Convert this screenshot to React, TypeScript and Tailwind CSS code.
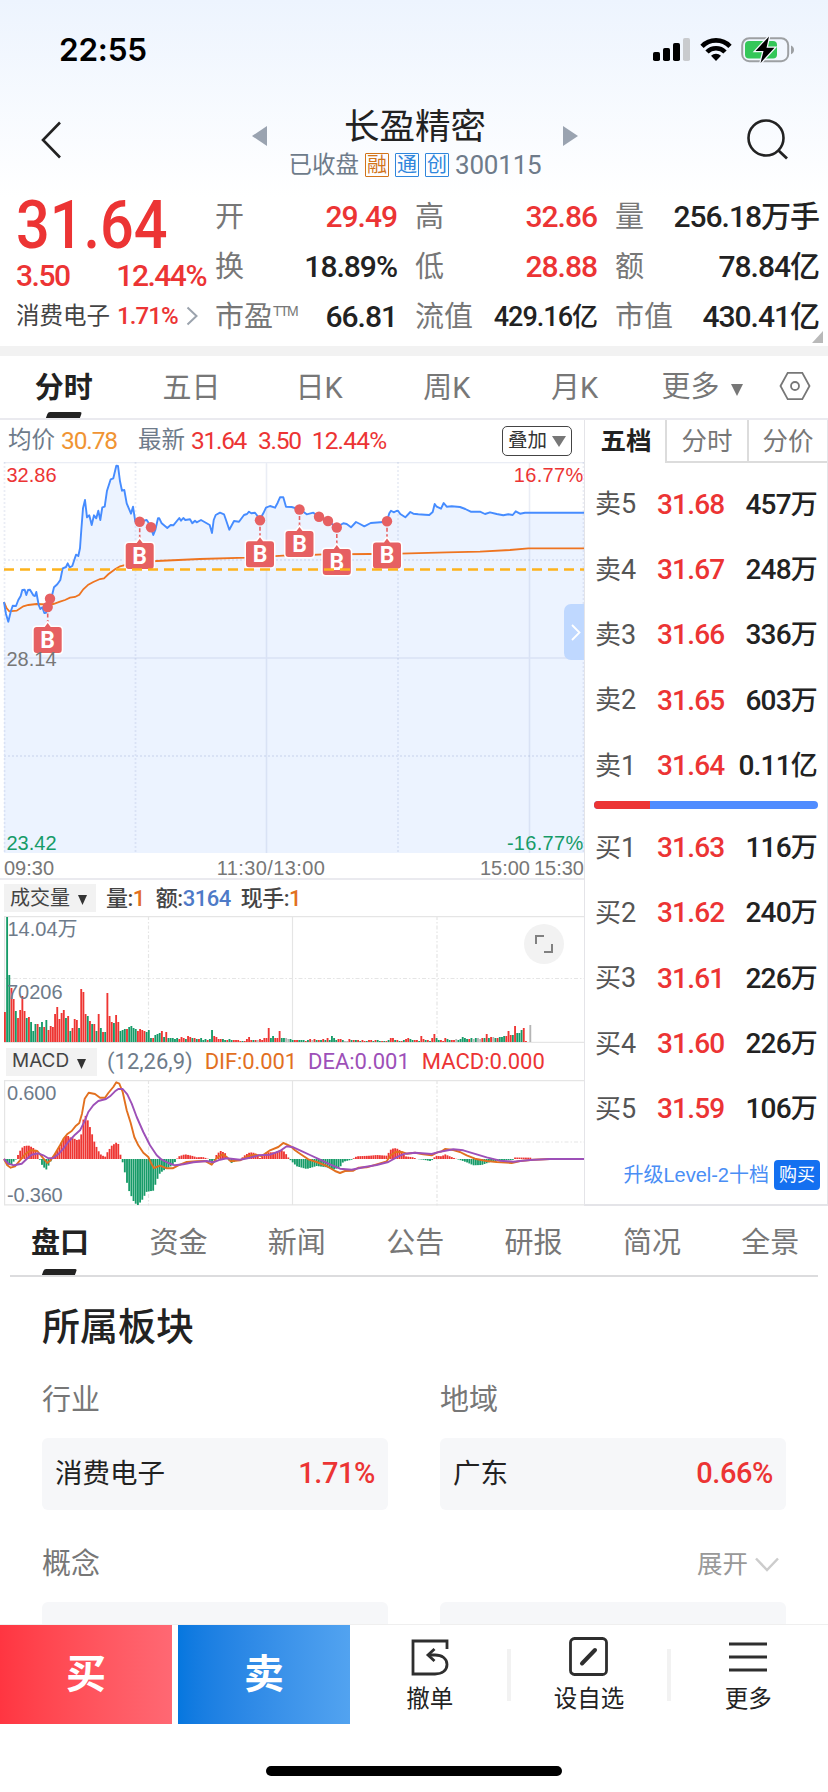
import React from 'react';
import clsx from 'clsx';

type Point = [number, number];

const QUOTES = [
  { label: '开', value: '29.49', up: true },
  { label: '高', value: '32.86', up: true },
  { label: '量', value: '256.18', unit: '万手' },
  { label: '换', value: '18.89%' },
  { label: '低', value: '28.88', up: true },
  { label: '额', value: '78.84', unit: '亿' },
  { label: '市盈', sup: 'TTM', value: '66.81' },
  { label: '流值', value: '429.16', unit: '亿', small: true },
  { label: '市值', value: '430.41', unit: '亿' },
];

const PERIODS = ['分时', '五日', '日K', '周K', '月K'];
const SECTIONS = ['盘口', '资金', '新闻', '公告', '研报', '简况', '全景'];

const SELLS = [
  ['卖5', '31.68', '457', '万'],
  ['卖4', '31.67', '248', '万'],
  ['卖3', '31.66', '336', '万'],
  ['卖2', '31.65', '603', '万'],
  ['卖1', '31.64', '0.11', '亿'],
];

const BUYS = [
  ['买1', '31.63', '116', '万'],
  ['买2', '31.62', '240', '万'],
  ['买3', '31.61', '226', '万'],
  ['买4', '31.60', '226', '万'],
  ['买5', '31.59', '106', '万'],
];

// Chart series, in pixels of each chart's own viewBox
const PRICE =
  '4,140 6,152 8.3,159.7 10.7,149.7 12.7,143.7 16,144 18.3,138 20.7,134 22.3,128 24.7,127.7 26.3,133 28,128 30,127.7 33.3,133.3 35,134 36.3,130 38.7,143 40.3,147 42.3,145.3 44.3,151 46,150.7 48.7,141.3 50.7,138.7 54,125.3 57.3,122.3 60.3,118 62.7,106.3 66,105 67.7,101.3 69.7,105.3 72.3,104 76,92.7 78.3,94 80,86.3 81.3,68 83,46.3 85,38 87,55.3 89.3,53.3 91.7,63 94,53.3 96.3,56.3 98.3,48.7 100.3,58 102.3,45.3 104.7,44.7 107,28.7 110.7,17.3 113.3,16.3 116.3,3.7 118,4 120,19.3 122,28.7 124.3,28 126.7,41.3 131,51.7 133,44.7 135.3,59.7 137.3,58 139.3,59.7 146.7,58 150,63 153.3,73 155.3,68 158,56.3 159.3,56.3 161.7,61.3 167.3,66 170.7,63 173.3,63.3 179.3,56 181,58.7 183.3,56 185.3,58 190,57.3 192.3,61.3 195,58.7 196.7,60.3 201,58 206.7,61.3 209.7,63 212,71 213.7,58 215.7,53 220,50.7 224,52.3 226,58 229.3,67.7 234,59 239,59.7 244,53 247,52 249,49.7 251.3,51.3 255,50.7 260,57.3 263.3,51.3 266,45.7 270,44 275,45.7 277.7,40.7 280,35.3 283.3,35.3 286,44.7 291.7,45 299.3,47.3 303.3,49.7 306.7,52.3 313.3,50.7 319,54.7 327.7,59 336.7,65.3 343.3,61.3 346.7,62 351,65.3 356,60 360,62 364.3,64.3 370.7,61 386.7,59.7 389.3,51.3 391,48.7 393.7,50.3 396.3,49 398,48.7 400.3,52 405.3,55.3 410.3,50 413.3,51.7 418.3,52.3 425,52.7 429.3,53 432.7,50 434.7,42 436.7,44.7 441,46.7 443.7,41 446.7,44.7 451.7,44.3 460,45 465.3,47 470.7,49.7 480,49.7 485,52 490,50.3 496.7,52 503.3,53.3 508.3,52.3 512.7,53 515.7,49.3 520,51.7 525,50.7 584,50.7';

const AVERAGE =
  '4,140 6.7,146.3 9.3,149.3 16.7,148.7 23.3,144.3 28.3,143 36.7,142 46.7,142.3 53.3,142 60,139.7 65,138 70,135.7 75,135 79.3,132.7 83.3,127.3 88.3,122.7 93.3,120 100,117 104,116.3 108.3,112.3 115,107.3 120,104.3 126.7,102.7 140,100.3 156.7,99 200,97 246.7,95.7 283.3,93.7 299,93.5 323.3,92.3 370,92 400,91.7 446.7,90.3 480,89.7 510,88 528.3,86.3 584,86.3';

const DIF =
  '4,75 7.3,81.3 10.7,83.7 15,82.3 20,76.3 25,70.3 30.7,66.3 37.3,67 42.7,73.7 47.3,79 50.7,76.3 55,69.7 60,61.3 64,54 67.7,49.7 71.7,47 76,41.7 79.3,39 82,29.7 84.7,14.7 88.7,8.7 95,10 100,13.7 105,13.7 108.3,9 113.3,3 116.3,-1.7 119.3,-0.3 122.7,8 126.7,26.3 130.7,39 134.3,53 138.3,61.3 143.3,68.7 148.3,73 151.7,80.3 154,84 160,81.7 166.7,84.3 172.7,84.3 178.3,81.3 186.7,78 196.7,77.3 205,77 211.7,80.7 216.7,74 222.7,70.3 226.7,73 230.7,77.3 240,76.3 248.3,72 255,70.7 261.7,72 270,66.3 278.3,63 283.3,59 286.7,60.3 290.7,62.3 295,66.3 300,69.7 308.3,75.3 316.7,78 326.7,82 335,87 340,89 345,87 353.3,86.7 358.3,83.7 366.7,83.3 376.7,80.3 386.7,77.3 390.7,71.3 396,67.7 401.7,68 406.7,69.7 415,68.7 423.3,70.3 431.7,71.3 436.7,68.7 441.7,67.3 445,65 453.3,66 460,68 466.7,71.3 475,74.7 486.7,77 496.7,78 511.7,79 520,77 533.3,75.7 550,75 584,75';

const DEA =
  '4,75 8.3,79.7 14,81.3 21.7,79.7 26.7,75 31.7,70.7 38.3,69.3 43.3,71.3 48.3,74.3 53.3,74 58.3,70.3 63.3,64.7 68.3,58 75,50.7 80,46.3 85,36.3 88.3,28 93.3,21.3 98.3,17 106,15 110,12.3 115,7.3 118.3,5 122.7,5 127.3,10.3 131.7,19.7 136.7,33 143.3,48 150,61.3 156.7,71.3 161.7,75.7 168.3,79 175,81.3 183.3,80.3 193.3,78.3 206.7,77 213.3,78.3 220,75.7 226.7,74.3 240,75.7 250,73.7 258.3,71.3 270,70.7 280,67 286.7,62.3 293.3,63.3 300,66.3 310,71 320,75.7 330,80.3 340,84.7 351.7,85.7 363.3,83.3 376.7,81 388.3,78 398.3,72.3 405,69.7 415,68.7 431.7,70 440,67.7 453.3,65.3 463.3,66.3 473.3,69.3 486.7,73.3 500,76.7 513.3,77.7 530,76 550,75 584,75';

// MACD histogram envelope: [x, height], green below zero
const HIST: Point[] = [
  [4, -1], [7.3, -6], [10.7, -6], [15, -1], [16.7, 0], [18.3, 5], [21.7, 11], [25, 13.3], [29.3, 13.3], [35, 10], [38.7, 3],
  [39.5, 0], [41.3, -5], [46, -11], [50, -4], [51.7, 0], [53.3, 3.3], [58.3, 10], [63.3, 20], [66.7, 24], [70, 21.7], [75, 20],
  [78.3, 18.3], [81, 23], [82.7, 36.7], [84.7, 44.7], [87.3, 40], [90, 31.7], [95, 15], [100, 5], [105, 2], [107.3, 6.7],
  [111.7, 13.3], [116.7, 16.7], [118.3, 15], [120.3, 5], [121.3, 0], [123.3, -5], [126, -20], [129, -31.7], [133.3, -41.7],
  [137.3, -46.7], [141.7, -41.7], [146.7, -32.7], [153.3, -31.7], [156.7, -21.7], [160, -14], [166.7, -9.3], [173.3, -6],
  [176.7, 0], [179, 2.7], [185, 4.7], [191.7, 3.3], [196.7, 1.7], [202.7, 2], [207, 0.6], [208.3, 0], [212, -4.7], [215, 0],
  [216.7, 5], [220.7, 8], [225, 6], [227.7, 0], [231.7, -4], [236.7, -1.7], [240.7, 0], [245, 4], [250, 6.7], [255, 6],
  [260, 1], [266.7, 6.7], [275, 6.7], [280, 9.3], [283.3, 8.3], [286, 5], [289.3, 0], [293.3, -4], [296.7, -7.3], [306.7, -10],
  [316.7, -7], [326.7, -8.3], [333.3, -10.7], [340, -8.3], [343.3, -2.7], [351.7, -0.7], [354, 1], [356.7, 2.7], [370, 3.3],
  [376.7, 4], [386.7, 3.3], [390.7, 9.3], [394, 11], [398.3, 10], [401.7, 7.3], [405, 2.7], [413.3, 1.7], [416.7, 0],
  [423.3, -0.7], [430, -2], [433.5, -0.5], [435, 3.3], [441.7, 2.7], [445, 4.7], [448.3, 3.3], [453.3, 1.3], [456.7, 0],
  [460, -1], [466.7, -3.3], [473.3, -6.3], [481.7, -6], [490, -3], [500, -1.7], [512.7, -1], [515, 1.5], [533.3, 1.3], [550, 0],
];

// One bar per minute: r = up, g = down, x = flat
const VOLUME =
  'r30 g125 g67 r54 r43 g31 r24 r32 r46 r31 g24 r25 g20 g11 g18 r18 g15 g20 r15 g22 r12 r16 r15 r28 r35 r23 r29 r32 g24 r26 ' +
  'g11 r14 r23 r22 g14 r53 r50 r28 g26 r21 g18 r18 g11 r28 g14 r10 g10 r49 r26 r20 g19 r27 r20 g11 g12 g13 r13 g15 g16 g14 ' +
  'g13 r11 r13 r12 r11 g10 g12 g4 r4 g7 g8 g9 r11 g5 r10 g4 g4 g4 g3 g4 r3 r5 r4 g3 r6 r5 g4 r4 g3 r3 g4 g2 g3 ' +
  'r2 g3 g12 r6 r5 r3 r3 g3 g2 r2 g3 g2 r2 r2 r2 r1 g1 r1 r3 r5 r2 g2 r2 x2 r3 r2 r4 r4 r14 g4 g6 r4 r4 r11 g4 g4 ' +
  'x4 x3 g3 g2 r2 r2 g2 g2 g2 r1 g2 r3 x2 r3 g2 r2 g2 r3 g2 r4 g2 g6 g4 g2 r3 r3 g2 x1 x1 r3 g2 r2 g2 r2 g1 r2 r1 g1 r2 r2 ' +
  'g1 r2 g2 g1 r1 g1 r1 g2 r4 r4 g2 r2 g1 r1 g2 r3 r4 g3 g2 r2 r2 g1 r6 r3 g2 r2 g1 r4 r8 g4 g2 r2 r1 r4 g3 g2 r2 r2 x3 g2 g3 g5 g4 g3 r3 ' +
  'g4 x3 g4 x4 x3 r4 g4 r8 g4 r5 x5 g4 r4 g5 g5 g6 r6 r11 r7 g7 r16 g9 g9 g12 r14 r1 x0 x17';

const BARS = VOLUME.split(' ').map((s) => ({ kind: s[0], h: Number(s.slice(1)) }));
const STEP = 2.18;
const BAR_COLORS: Record<string, string> = { r: '#ee3532', g: '#169b68', x: '#b5b5b5' };

const histAt = (x: number) => {
  const i = HIST.findIndex((p) => p[0] > x);
  if (i <= 0) return 0;
  const [x0, y0] = HIST[i - 1];
  const [x1, y1] = HIST[i];
  return y0 + ((y1 - y0) * (x - x0)) / (x1 - x0);
};

// Buy marks: [x, dot y, box centre y]
const MARKS: [number, number, number][] = [
  [47.7, 145, 178],
  [139.7, 59.7, 94],
  [260, 58.3, 92.3],
  [299.5, 47.5, 82],
  [336.8, 65.5, 100],
  [387, 59.3, 93.5],
];
const DOTS: Point[] = [[50, 136.7], [151, 65.3], [319, 54.7], [328, 59]];

const StatusBar = () => (
  <div className="flex h-[96px] items-start justify-between pr-[33px] pl-[59px] pt-[34px]">
    <span className="font-['Inter'] text-[31.500px] leading-[32px] font-semibold tracking-[-0.200px] text-black">22:55</span>
    <svg width="142" height="28" viewBox="0 0 142 28" className="mt-[2px]">
      <g fill="#000">
        <rect x="0" y="16" width="7" height="9" rx="1.8" />
        <rect x="10" y="12" width="7" height="13" rx="1.8" />
        <rect x="20" y="7" width="7" height="18" rx="1.8" />
        <rect x="30" y="2" width="7" height="23" rx="1.8" fill="#c9cbce" />
      </g>
      <g fill="none" stroke="#000" strokeWidth="4.6">
        <path d="M49 10.3a19.5 19.5 0 0 1 28 0" />
        <path d="M54 16a12.6 12.6 0 0 1 18 0" />
      </g>
      <path d="M63 25l-5-5.2a7.3 7.3 0 0 1 10 0z" fill="#000" />
      <rect x="89.2" y="2.2" width="46" height="23" rx="7" fill="none" stroke="#9da0a3" strokeWidth="2" />
      <path d="M138 9.5c4 1.2 4 7.6 0 8.8z" fill="#9da0a3" />
      <rect x="92" y="5" width="32" height="17.5" rx="4" fill="#34c759" />
      <path d="M116 0.5L102.5 15h8l-3 12L121.500 11.800h-8z" fill="#000" stroke="#f6f9ff" strokeWidth="2.5" paintOrder="stroke" />
    </svg>
  </div>
);

const TitleBar = () => (
  <div className="flex h-[96px] items-start justify-between pr-[38px] pl-[39px]">
    <svg width="24" height="40" viewBox="0 0 24 40" className="mt-[24px]">
      <path d="M21 2.5L4 20l17 17.5" fill="none" stroke="#222" strokeWidth="2.6" />
    </svg>
    <div className="flex flex-col items-center pl-[21px]">
      <div className="mt-[9px] flex items-center gap-[77px]">
        <svg width="15" height="20" className="mt-[17px]"><path d="M15 0v20L0 10z" fill="#9aa3b0" /></svg>
        <span className="text-[35.500px] leading-[44px] text-[#222]">长盈精密</span>
        <svg width="15" height="20" className="mt-[17px]"><path d="M0 0v20l15-10z" fill="#9aa3b0" /></svg>
      </div>
      <div className="mt-[2px] flex items-center gap-[6px] text-[23.500px] leading-[28px] text-[#6e7b8a]">
        <span>已收盘</span>
        <span className="flex size-[24px] items-center justify-center rounded-[1px] border border-[#d2741a] text-[20px] text-[#d2741a]">融</span>
        <span className="flex size-[24px] items-center justify-center rounded-[1px] border border-[#2f86dc] text-[20px] text-[#2f86dc]">通</span>
        <span className="flex size-[24px] items-center justify-center rounded-[1px] border border-[#2f86dc] text-[20px] text-[#2f86dc]">创</span>
        <span className="text-[26px] tracking-[-0.200px]">300115</span>
      </div>
    </div>
    <svg width="44" height="42" viewBox="0 0 44 42" className="mt-[22px]">
      <circle cx="20" cy="20" r="17.500" fill="none" stroke="#222" strokeWidth="2.6" />
      <path d="M32 32l9 8.5" stroke="#222" strokeWidth="2.8" />
    </svg>
  </div>
);

const QuotePanel = () => (
  <div className="relative flex h-[154px]">
    <div className="w-[215px] pl-[16px] text-[#ec3434]">
      <div className="mt-[6px] w-[170px] origin-left scale-x-[0.900] text-[66px] leading-[56px] font-medium">31.64</div>
      <div className="mt-[5px] flex w-[190px] justify-between text-[30px] leading-[34px] font-medium tracking-[-1.500px]">
        <span>3.50</span>
        <span>12.44%</span>
      </div>
      <div className="mt-[8px] flex items-center leading-[30px]">
        <span className="text-[23.500px] text-[#444]">消费电子</span>
        <span className="ml-[7px] text-[24px] font-medium tracking-[-0.900px]">1.71%</span>
        <svg width="12" height="20" className="ml-[8px]"><path d="M1.5 1.5l9 8.5-9 8.5" fill="none" stroke="#9ba3ad" strokeWidth="2" /></svg>
      </div>
    </div>
    <div className="grid h-[150px] grid-cols-[182px_182px_204px] grid-rows-3 gap-x-[18px]">
      {QUOTES.map((q) => (
        <div key={q.label} className="flex items-center justify-between whitespace-nowrap">
          <span className="flex text-[29px] leading-[40px] text-[#777]">
            {q.label}
            {q.sup && <span className="mt-[4px] font-['Liberation_Sans'] text-[14px] leading-[20px] tracking-[-1.500px]">{q.sup}</span>}
          </span>
          <span
            className={clsx(
              'font-medium leading-[40px]',
              q.small ? 'text-[27px] tracking-[-1px]' : 'text-[30px] tracking-[-1px]',
              q.up ? 'text-[#ec3434]' : 'text-[#222]',
            )}
          >
            {q.value}
            {q.unit && <span className={q.small ? 'text-[26px]' : 'text-[30px]'}>{q.unit}</span>}
          </span>
        </div>
      ))}
    </div>
    <svg width="11" height="12" className="absolute top-[139px] right-[5px]"><path d="M11 0v12H0z" fill="#b9b9b9" /></svg>
  </div>
);

const PeriodTabs = () => (
  <div className="flex h-[64px] border-b-2 border-[#eaeaef] text-[29px] leading-[64px] text-[#777]">
    {PERIODS.map((name, i) => (
      <div key={name} className={clsx('relative w-[127.700px] text-center', i === 0 && 'font-bold text-[#222]')}>
        {name}
        {i === 0 && <span className="absolute bottom-0 left-[47px] h-[6px] w-[34px] -skew-x-[20deg] rounded-t-[2px] bg-[#222]" />}
      </div>
    ))}
    <div className="ml-[23px] flex items-center">
      更多
      <svg width="12" height="12" className="mt-[6px] ml-[12px]"><path d="M0 0h12L6 12z" fill="#777" /></svg>
    </div>
    <svg width="32" height="30" viewBox="0 0 32 30" className="mt-[15px] ml-[36px]" fill="none" stroke="#777" strokeWidth="1.8">
      <path d="M1.5 15L8.7 1.8h14.600L30.500 15l-7.200 13.200H8.700z" />
      <circle cx="16" cy="15" r="4" />
    </svg>
  </div>
);

const PriceChart = () => (
  <div className="relative">
    <svg width="584" height="416" viewBox="0 0 584 416" className="block">
      <path d={`M4,391 L${PRICE.split(' ').join(' L')} V391 Z`} fill="#ecf3ff" />
      <g stroke="#6a7fb8" strokeOpacity="0.14" strokeWidth="1.5" fill="none">
        <path d="M4 0.5H584M4 196H584M266.500 0V391M529.500 0V391" />
        <path d="M4 98H584M4 294H584M4.500 0V391M135.500 0V391M398 0V391M583.500 0V391" strokeDasharray="2 2" strokeWidth="1.8" />
      </g>
      <polyline points={AVERAGE} fill="none" stroke="#ee7420" strokeWidth="1.8" />
      <polyline points={PRICE} fill="none" stroke="#468cff" strokeWidth="1.9" strokeLinejoin="round" />
      {MARKS.map(([x, dot, box]) => (
        <g key={x}>
          <path d={`M${x} ${dot}V${box - 15}`} stroke="#e66062" strokeWidth="1.6" strokeDasharray="4 2.5" />
          <circle cx={x} cy={dot} r="5.2" fill="#e66062" />
          <path
            d={`M${x - 11} ${box - 13}h8l3-4l3 4h8q3 0 3 3v20q0 3-3 3h-22q-3 0-3-3v-20q0-3 3-3z`}
            fill="#e66062"
            stroke="#fff"
            strokeWidth="3"
            paintOrder="stroke"
          />
          <text x={x} y={box + 7.5} textAnchor="middle" className="fill-white font-['Roboto'] text-[23px] font-bold">B</text>
        </g>
      ))}
      {DOTS.map(([x, y]) => (
        <circle key={x} cx={x} cy={y} r="5.2" fill="#e66062" />
      ))}
      <path d="M4 107.5H584" stroke="#fdb31c" strokeWidth="2.4" strokeDasharray="10 6" />
      <g className="font-['Liberation_Sans'] text-[20px]">
        <text x="6.5" y="19.5" fill="#ec3434">32.86</text>
        <text x="583.5" y="19.5" fill="#ec3434" textAnchor="end" letterSpacing="0.3">16.77%</text>
        <text x="6.5" y="203.5" fill="#777">28.14</text>
        <text x="6.5" y="388" fill="#169b68">23.42</text>
        <text x="583.5" y="388" fill="#169b68" textAnchor="end" letterSpacing="0.3">-16.77%</text>
        <text x="4" y="413" fill="#777">09:30</text>
        <text x="271" y="413" fill="#777" textAnchor="middle" letterSpacing="0.4">11:30/13:00</text>
        <text x="530" y="413" fill="#777" textAnchor="end">15:00</text>
        <text x="584" y="413" fill="#777" textAnchor="end">15:30</text>
      </g>
    </svg>
    <div className="absolute top-[142px] right-0 flex h-[56px] w-[20px] items-center justify-center rounded-l-[7px] bg-[#bfd8ff]">
      <svg width="10" height="17" className="ml-[3px]"><path d="M1 1l7.5 7.500L1 16" fill="none" stroke="#fff" strokeWidth="1.8" /></svg>
    </div>
  </div>
);

const Selector = ({ name, className }: { name: string; className: string }) => (
  <div className={clsx('flex items-center bg-[#f2f2f2] pl-[6px] text-[#444]', className)}>
    {name}
    <svg width="9" height="10" className="mt-[4px] ml-[8px]"><path d="M0 0h9L4.5 10z" fill="#333" /></svg>
  </div>
);

const Grid = ({ height, mid }: { height: number; mid: number }) => (
  <g stroke="#e5e5e5" fill="none" strokeWidth="1.2">
    <path d={`M4 0.6H584M4 ${height - 0.6}H584M292.5 0V${height}M4.6 0V${height}`} />
    <path d={`M4 ${mid}H584M148.5 0V${height}M437 0V${height}`} strokeDasharray="4 2 1.5 2" />
  </g>
);

const VolumeChart = () => (
  <div className="relative">
    <svg width="584" height="127" viewBox="0 0 584 127" className="block">
      <Grid height={127} mid={62.5} />
      {BARS.map((b, i) => (
        <rect key={i} x={4 + i * STEP} y={126 - b.h} width={1.85} height={b.h} fill={BAR_COLORS[b.kind]} />
      ))}
      <g fill="#6e7b8a" className="font-['Liberation_Sans','Noto_Sans_CJK_SC',sans-serif] text-[20px]">
        <text x="7.5" y="19.5">14.04万</text>
        <text x="7" y="83">70206</text>
      </g>
    </svg>
    <div className="absolute top-[8px] right-[20px] flex size-[40px] items-center justify-center rounded-full bg-[#f2f2f2]">
      <svg width="18" height="18" fill="none" stroke="#808080" strokeWidth="2"><path d="M1 9V1h8M17 9v8H9" /></svg>
    </div>
  </div>
);

const MacdChart = () => (
  <svg width="584" height="126" viewBox="0 0 584 126" className="block overflow-visible">
    <Grid height={125.5} mid={62} />
    {BARS.map((_, i) => {
      const x = 4 + i * STEP;
      const h = histAt(x + 0.9);
      return <rect key={i} x={x} y={h > 0 ? 79 - h : 79} width={1.85} height={Math.abs(h)} fill={h > 0 ? '#ee3532' : '#169b68'} />;
    })}
    <g transform="translate(0 4)" fill="none" strokeWidth="1.9" strokeLinejoin="round">
      <polyline points={DIF} stroke="#e2701f" />
      <polyline points={DEA} stroke="#9d50b8" />
    </g>
    <g fill="#6e7b8a" className="font-['Liberation_Sans'] text-[20px]">
      <text x="7" y="20" letterSpacing="-0.2">0.600</text>
      <text x="7" y="122" letterSpacing="-0.2">-0.360</text>
    </g>
  </svg>
);

const ChartColumn = () => (
  <div className="w-[584px]">
    <div className="flex h-[42px] items-center pr-[12px] pl-[8px] text-[24.500px] whitespace-nowrap text-[#ec3434]">
      <span className="text-[23.500px] text-[#6e7b8a]">均价</span>
      <span className="ml-[6px] tracking-[-1.100px] text-[#f09433]">30.78</span>
      <span className="ml-[21px] text-[23.500px] text-[#6e7b8a]">最新</span>
      <span className="ml-[6px] tracking-[-1.300px]">31.64</span>
      <span className="ml-[12px] tracking-[-1.300px]">3.50</span>
      <span className="ml-[11px] tracking-[-0.800px]">12.44%</span>
      <div className="ml-auto flex h-[30px] w-[70px] items-center justify-center gap-[5px] rounded-[5px] border-[1.500px] border-[#444] text-[19.500px] text-[#333]">
        叠加
        <svg width="14" height="11"><path d="M0 0h14L7 11z" fill="#777" /></svg>
      </div>
    </div>
    <PriceChart />
    <div className="flex h-[38px] items-center border-t-2 border-[#eaeaef] pl-[4px] text-[22px] font-medium whitespace-nowrap text-[#444]">
      <Selector name="成交量" className="h-[28px] w-[92px] text-[20px] font-normal" />
      <span className="ml-[10px] tracking-[-0.500px]">量:<span className="text-[#e2701f]">1</span></span>
      <span className="ml-[11px] tracking-[-0.500px]">额:<span className="text-[#4e7ac7]">3164</span></span>
      <span className="ml-[10px] tracking-[-0.500px]">现手:<span className="text-[#e2701f]">1</span></span>
    </div>
    <VolumeChart />
    <div className="flex h-[37px] items-center pl-[6px] text-[22px] whitespace-nowrap">
      <Selector name="MACD" className="h-[28px] w-[91px] font-['Inter'] text-[19px]" />
      <span className="ml-[10px] text-[#6e7b8a]">(12,26,9)</span>
      <span className="ml-[12px] tracking-[-0.100px] text-[#e2701f]">DIF:0.001</span>
      <span className="ml-[11px] text-[#9d50b8]">DEA:0.001</span>
      <span className="ml-[12px] text-[#ec3434]">MACD:0.000</span>
    </div>
    <MacdChart />
  </div>
);

const DepthRow = ({ row }: { row: string[] }) => (
  <div className="flex h-[65.300px] items-center pr-[10px] pl-[10px] text-[28px] whitespace-nowrap">
    <span className="w-[62px] text-[26px] text-[#555]">
      {row[0][0]}
      <span className="text-[27px]">{row[0][1]}</span>
    </span>
    <span className="font-medium tracking-[-0.800px] text-[#ec3434]">{row[1]}</span>
    <span className="ml-auto font-medium tracking-[-0.800px] text-[#222]">
      {row[2]}
      <span className="text-[27px]">{row[3]}</span>
    </span>
  </div>
);

const DepthColumn = () => (
  <div className="w-[244px] border-x-[1.500px] border-b-2 border-[#e4e4e8]">
    <div className="flex h-[43px] text-center text-[25.500px] leading-[42px] text-[#777]">
      <div className="w-[80px] pl-[2px] font-bold text-[#222]">五档</div>
      <div className="w-[82px] border-b-2 border-l-2 border-[#dcdcdc]">分时</div>
      <div className="flex-1 border-b-2 border-l-2 border-[#dcdcdc]">分价</div>
    </div>
    <div className="mt-[9px]">{SELLS.map((row) => <DepthRow key={row[0]} row={row} />)}</div>
    <div className="mt-[3px] ml-[9px] flex h-[8px] w-[224px] overflow-hidden rounded-full bg-[#4f8cff]">
      <div className="w-1/4 bg-[#ec3434]" />
    </div>
    <div className="mt-[6px]">{BUYS.map((row) => <DepthRow key={row[0]} row={row} />)}</div>
    <div className="mt-[18px] flex items-center justify-end gap-[5px] pr-[7px] text-[20px] leading-[30px] whitespace-nowrap">
      <span className="font-['Liberation_Sans','Noto_Sans_CJK_SC',sans-serif] text-[#4a8ef5]">升级Level-2十档</span>
      <span className="w-[46px] rounded-[4px] bg-[#1470f0] text-center text-[18px] text-white">购买</span>
    </div>
  </div>
);

const SectionTabs = () => (
  <div className="mx-[10px] flex h-[71px] border-b-2 border-[#dcdcde] text-[29px] leading-[74px] text-[#777]">
    {SECTIONS.map((name, i) => (
      <div key={name} className={clsx('relative h-[69px] w-[118.400px] shrink-0 pl-[21px]', i === 0 && 'font-bold text-[#222]')}>
        {name}
        {i === 0 && <span className="absolute bottom-0 left-[33px] h-[6px] w-[33px] -skew-x-[20deg] rounded-t-[2px] bg-[#222]" />}
      </div>
    ))}
  </div>
);

const Sector = ({ title, name, change }: { title: string; name: string; change: string }) => (
  <div className="w-[346px]">
    <div className="text-[29px] leading-[40px] text-[#777]">{title}</div>
    <div className="mt-[18px] flex h-[72px] items-center justify-between rounded-[6px] bg-[#f6f7f9] px-[13px] text-[27.500px] text-[#222]">
      {name}
      <span className="text-[29px] font-medium tracking-[-0.400px] text-[#ec3434]">{change}</span>
    </div>
  </div>
);

const Sectors = () => (
  <div className="h-[347px] overflow-hidden px-[42px] pt-[25px]">
    <div className="text-[38px] leading-[50px] font-medium text-[#222]">所属板块</div>
    <div className="mt-[28px] flex justify-between">
      <Sector title="行业" name="消费电子" change="1.71%" />
      <Sector title="地域" name="广东" change="0.66%" />
    </div>
    <div className="mt-[34px] flex items-center justify-between text-[29px] leading-[40px] text-[#777]">
      概念
      <span className="flex items-center pr-[7px] text-[25.500px] text-[#999]">
        展开
        <svg width="24" height="15" className="ml-[7px]"><path d="M1 1.5L12 13 23 1.5" fill="none" stroke="#ccc" strokeWidth="2.5" /></svg>
      </span>
    </div>
    <div className="mt-[18px] flex justify-between">
      <div className="h-[72px] w-[346px] rounded-[6px] bg-[#f6f7f9]" />
      <div className="h-[72px] w-[346px] rounded-[6px] bg-[#f6f7f9]" />
    </div>
  </div>
);

const Action = ({ label, last, children }: { label: string; last?: boolean; children: React.ReactNode }) => (
  <div className="flex h-[100px] flex-1 items-center">
    <div className="flex flex-1 flex-col items-center">
      <svg width="42" height="42" viewBox="0 0 42 42" fill="none" stroke="#2e2e2e" strokeWidth="2.8" className="mt-[2px]">{children}</svg>
      <span className="mt-[4px] text-[23.500px] leading-[34px] text-[#222]">{label}</span>
    </div>
    {!last && <span className="-mx-[2px] h-[52px] w-[4px] bg-[#f2f2f2]" />}
  </div>
);

const BottomBar = () => (
  <div className="flex h-[101px] border-t border-[#efefef]">
    <div className="flex h-[99px] w-[172px] items-center justify-center bg-linear-to-r from-[#ff3541] to-[#ff6873] text-[40px] font-bold text-white">买</div>
    <div className="ml-[6px] flex h-[99px] w-[172px] items-center justify-center bg-linear-to-r from-[#0577df] to-[#52a3f0] text-[40px] font-bold text-white">卖</div>
    <div className="flex flex-1">
      <Action label="撤单">
        <path d="M38 13V5H4v33h22c7 0 12-3.5 12-9.5s-5-9.500-12-9.500h-5" />
        <path d="M25.5 13L19 19l6.5 6" />
      </Action>
      <Action label="设自选">
        <rect x="2.5" y="2.5" width="36" height="36" rx="4" />
        <path d="M14 27.5L27 14" strokeWidth="4" strokeLinecap="round" />
      </Action>
      <Action label="更多" last>
        <path d="M2 8h38M2 21h38M2 34h38" />
      </Action>
    </div>
  </div>
);

const App: React.FC = () => (
  <div className="h-[1792px] w-[828px] overflow-hidden bg-white bg-linear-to-b from-[#edf4fe] from-0% to-white to-[11%] font-['Roboto','Noto_Sans_CJK_SC',sans-serif]">
    <StatusBar />
    <TitleBar />
    <QuotePanel />
    <div className="h-[10px] bg-[#f2f2f2]" />
    <PeriodTabs />
    <div className="flex h-[786px]">
      <ChartColumn />
      <DepthColumn />
    </div>
    <SectionTabs />
    <Sectors />
    <BottomBar />
    <div className="mx-auto mt-[41px] h-[10px] w-[296px] rounded-full bg-black" />
  </div>
);

export default App;
